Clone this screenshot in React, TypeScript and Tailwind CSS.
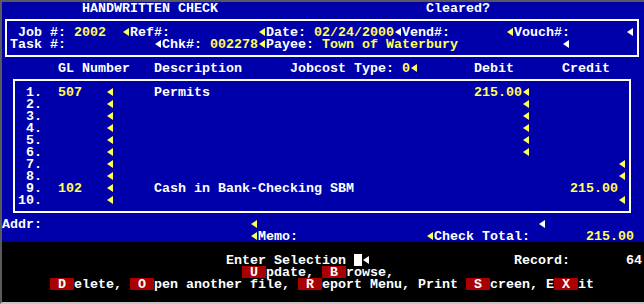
import React from 'react';

const W = 'text-white';
const Y = 'text-[#ffff55]';
const RED = 'bg-[#aa0000]';

// [col, text ('<' = field arrow), colour, background]
type Cell = [number, string, string?, string?];

function Arrow({ color }: { color: string }) {
  return (
    <span className={`inline-block w-2 h-3 shrink-0 ${color}`}>
      <svg width="8" height="12" viewBox="0 0 8 12">
        <polygon points="1,6 7,2 7,10" fill="currentColor" />
      </svg>
    </span>
  );
}

function Row({ from = 0, cells = [] }: { from?: number; cells?: Cell[] }) {
  let pos = from;
  const out: React.ReactNode[] = [];
  cells.forEach(([c, t, k = W, bg = ''], i) => {
    if (c > pos) out.push(<span key={'s' + i}>{' '.repeat(c - pos)}</span>);
    if (t === '<') {
      out.push(<Arrow key={i} color={k} />);
      pos = c + 1;
    } else {
      out.push(
        <span key={i} className={`${k} ${bg}`}>
          {t}
        </span>
      );
      pos = c + t.length;
    }
  });
  return <div className="flex h-3 leading-[14px] whitespace-pre">{out}</div>;
}

const lines: Cell[][] = [
  [[3, '1.'], [7, '507', Y], [13, '<', Y], [19, 'Permits'], [59, '215.00', Y], [65, '<', Y]],
  [[3, '2.'], [13, '<', Y], [65, '<', Y]],
  [[3, '3.'], [13, '<', Y], [65, '<', Y]],
  [[3, '4.'], [13, '<', Y], [65, '<', Y]],
  [[3, '5.'], [13, '<', Y], [65, '<', Y]],
  [[3, '6.'], [13, '<', Y], [65, '<', Y]],
  [[3, '7.'], [13, '<', Y], [77, '<', Y]],
  [[3, '8.'], [13, '<', Y], [77, '<', Y]],
  [[3, '9.'], [7, '102', Y], [13, '<', Y], [19, 'Cash in Bank-Checking SBM'], [71, '215.00', Y]],
  [[2, '10.'], [13, '<', Y], [77, '<', Y]],
];

export default function App() {
  return (
    <div className="w-[644px] h-[304px] bg-black border-t-2 border-l-2 border-[#5a5a5a] border-b-2 border-b-[#c4c4c4] font-['Liberation_Mono',monospace] font-bold text-[13.333px] text-white overflow-hidden">
      <div className="bg-[#0000aa] h-[240px]">
        <Row cells={[[10, 'HANDWRITTEN CHECK'], [53, 'Cleared?']]} />

        <div className="h-12 pt-[5px]">
          <div className="ml-[3px] w-[634px] h-[38px] border-2 border-white px-[3px] pt-[5px]">
            <Row
              from={1}
              cells={[
                [2, 'Job #:'], [9, '2002', Y], [15, '<', Y], [16, 'Ref#:'],
                [32, '<', Y], [33, 'Date:'], [39, '02/24/2000', Y], [49, '<', W],
                [50, 'Vend#:'], [63, '<', Y], [64, 'Vouch#:'], [78, '<', W],
              ]}
            />
            <Row
              from={1}
              cells={[
                [1, 'Task #:'], [19, '<', W], [20, 'Chk#:'], [26, '002278', Y],
                [32, '<', Y], [33, 'Payee:'], [40, 'Town of Waterbury', Y], [70, '<', W],
              ]}
            />
          </div>
        </div>

        <Row
          cells={[
            [7, 'GL Number'], [19, 'Description'], [36, 'Jobcost Type:'],
            [50, '0', Y], [51, '<', Y], [59, 'Debit'], [70, 'Credit'],
          ]}
        />

        <div className="h-36 pt-[5px]">
          <div className="ml-[11px] w-[618px] h-[134px] border-2 border-white px-[3px] pt-[5px]">
            {lines.map((l, i) => (
              <Row key={i} from={2} cells={l} />
            ))}
          </div>
        </div>

        <Row cells={[[0, 'Addr:'], [31, '<', Y], [67, '<', W]]} />
        <Row
          cells={[
            [31, '<', Y], [32, 'Memo:'], [53, '<', Y], [54, 'Check Total:'], [73, '215.00', Y],
          ]}
        />
      </div>

      <div className="h-[60px] pt-3">
        <Row
          cells={[
            [28, 'Enter Selection'], [44, ' ', W, 'bg-white'], [45, '<', W],
            [64, 'Record:'], [78, '64'],
          ]}
        />
        <Row cells={[[30, ' U ', W, RED], [33, 'pdate,'], [40, ' B ', W, RED], [43, 'rowse,']]} />
        <Row
          cells={[
            [6, ' D ', W, RED], [9, 'elete,'], [16, ' O ', W, RED], [19, 'pen another file,'],
            [37, ' R ', W, RED], [40, 'eport Menu, Print'], [58, ' S ', W, RED],
            [61, 'creen, E'], [69, ' X ', W, RED], [72, 'it'],
          ]}
        />
      </div>
    </div>
  );
}
